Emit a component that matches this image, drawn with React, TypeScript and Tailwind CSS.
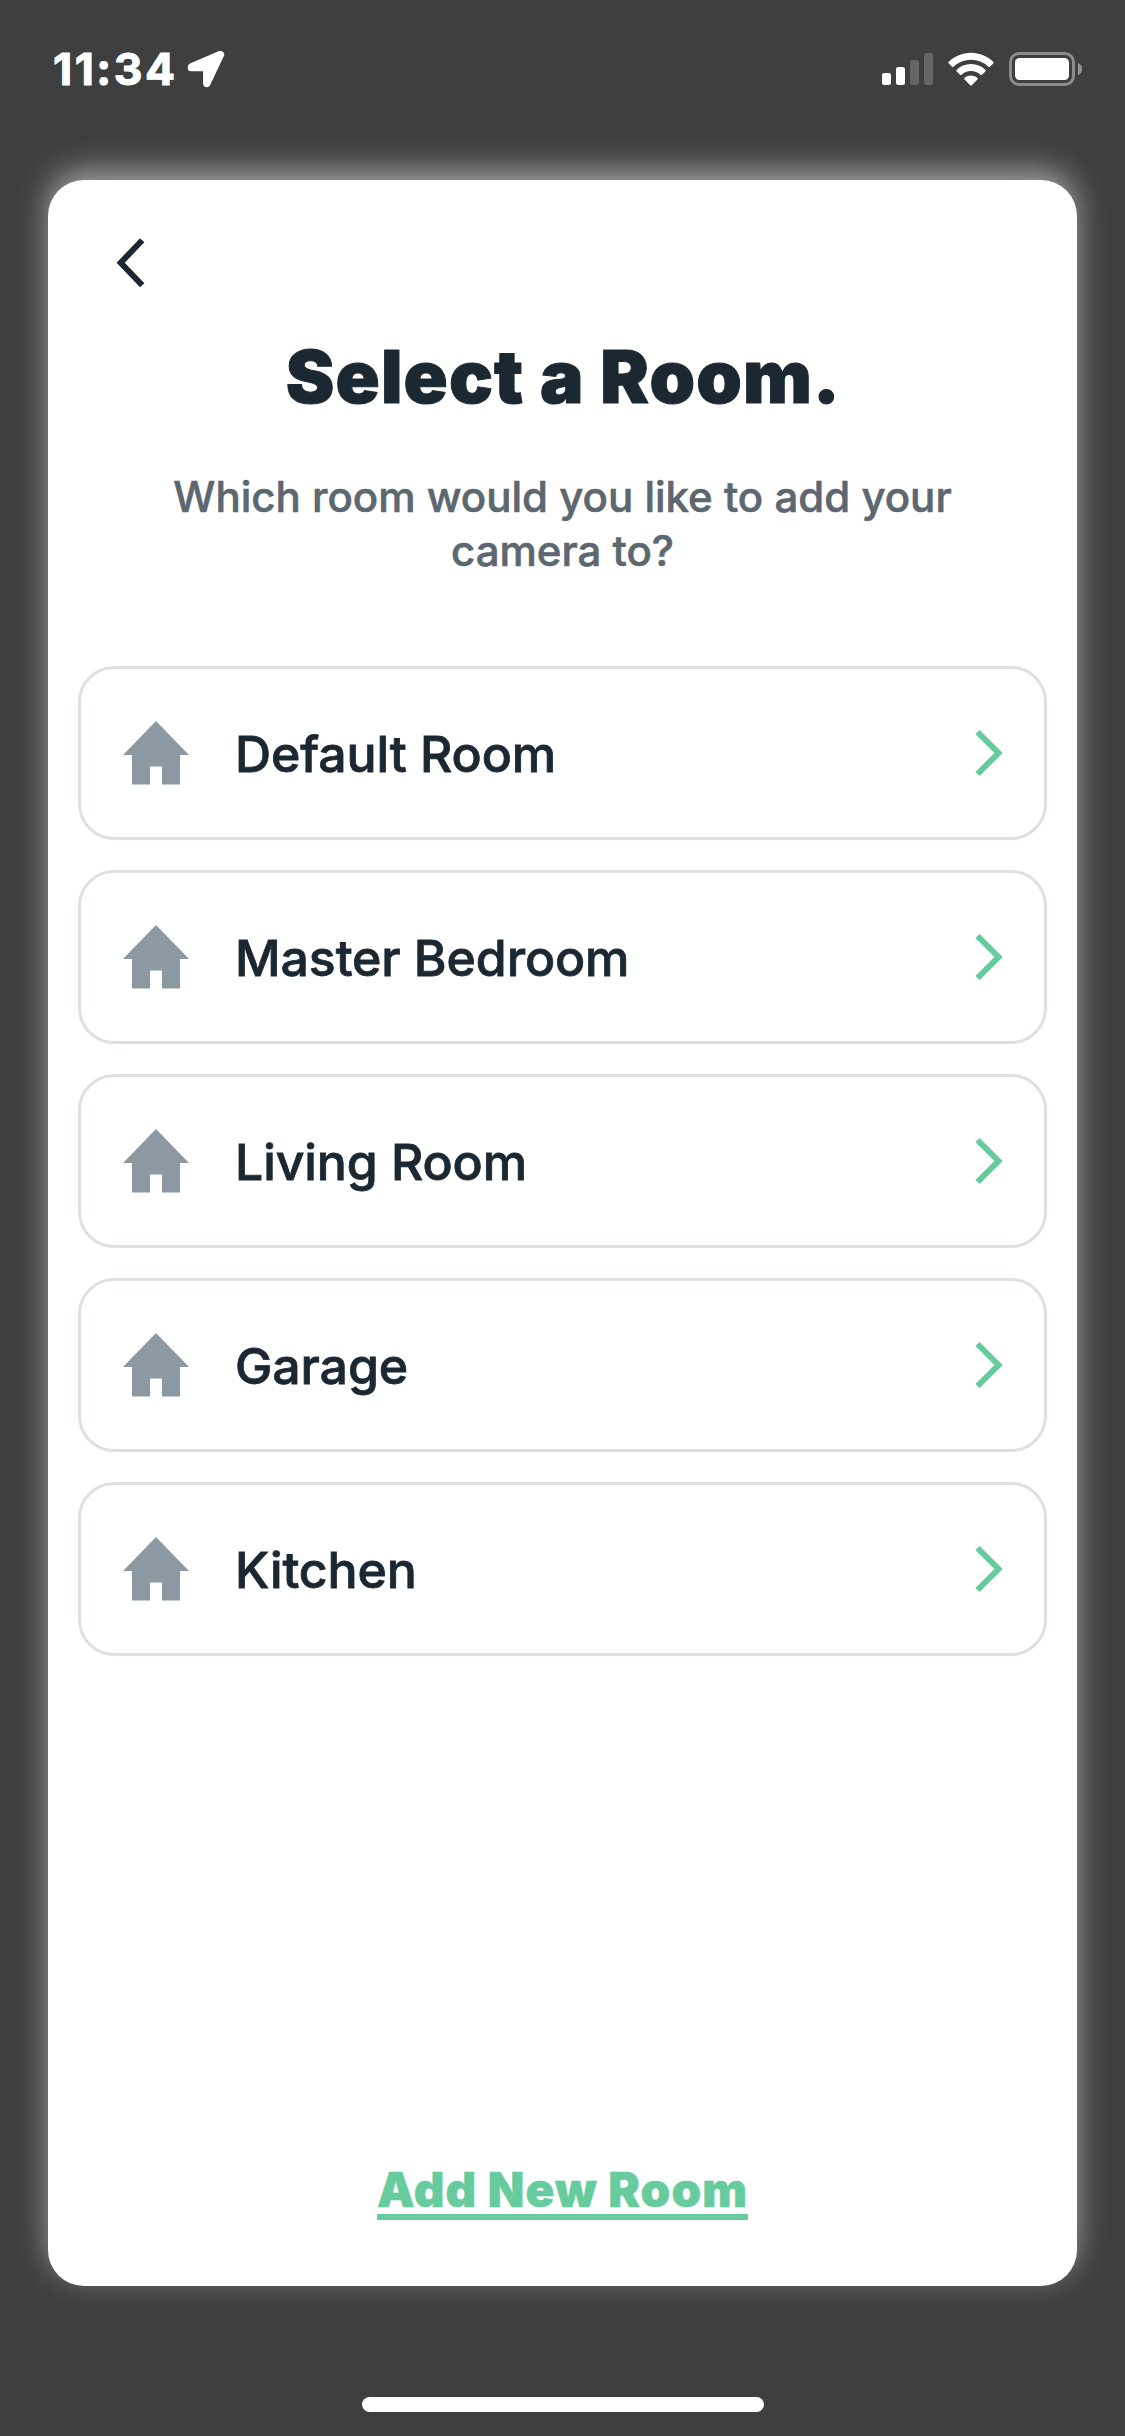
const rooms = ["Default Room", "Master Bedroom", "Living Room", "Garage", "Kitchen"];

function StatusBar() {
  return (
    <header className="flex h-[180px] items-start justify-between pt-[41px] pr-[42px] pl-[53px] text-white">
      <div className="flex h-14 items-center">
        <span className="w-[126px] text-[44.5px] leading-[56px] font-bold tracking-[2.5px] [-webkit-text-stroke:1px]">11:34</span>
        <svg className="ml-[8px] h-[38px] w-[38px]" viewBox="0 0 38 38" fill="currentColor">
          <path d="M31.5 1.3 3 13.6C-.2 15-.1 21.2 3.600 21.200H16.100V33.500C16.100 37.900 21.600 38.500 23.200 35L37 5.800C38.200 2.600 35.200-.1 31.500 1.300Z" />
        </svg>
      </div>
      <div className="flex h-14 items-center">
        <svg className="h-[32px] w-[51px]" viewBox="0 0 51 32" fill="currentColor">
          <rect x="0" y="20" width="9" height="12" rx="2.200" />
          <rect x="14" y="14" width="9" height="18" rx="2.200" />
          <rect x="28" y="7" width="9" height="25" rx="2.200" opacity=".2" />
          <rect x="42" y="0" width="9" height="32" rx="2.200" opacity=".2" />
        </svg>
        <svg className="ml-[15px] h-[34px] w-[46px]" viewBox="0 0 46 34" fill="currentColor">
          <path d="M23 .8C31.600.8 39.500 4.300 45.200 9.800Q46 10.600 45.200 11.400L42 14.700Q41.200 15.400 40.400 14.700A25 25 0 0 0 5.600 14.700Q4.800 15.400 4 14.700L.8 11.400Q0 10.600.8 9.800C6.500 4.300 14.400.8 23 .8Z" />
          <path d="M23 12.100C28.600 12.100 33.600 14.300 37.300 17.800Q38.100 18.600 37.300 19.400L34 22.700Q33.200 23.400 32.400 22.700A13.700 13.700 0 0 0 13.600 22.700Q12.800 23.400 12 22.700L8.700 19.400Q7.900 18.600 8.700 17.800C12.400 14.300 17.400 12.100 23 12.100Z" />
          <path d="M23 23.600C25.500 23.600 27.700 24.500 29.400 25.900Q30.200 26.700 29.400 27.500L23.800 33.200Q23 34 22.200 33.200L16.600 27.500Q15.800 26.700 16.600 25.900C18.300 24.500 20.500 23.600 23 23.600Z" />
        </svg>
        <svg className="ml-[15px] h-[34px] w-[74px]" viewBox="0 0 74 34" fill="currentColor">
          <rect x="1.500" y="1.500" width="63" height="31" rx="8.500" fill="none" stroke="currentColor" strokeWidth="3" opacity=".4" />
          <rect x="6" y="6" width="54" height="22" rx="4.500" />
          <path d="M69 11C71.600 12 73 14.300 73 17S71.600 22 69 23Z" opacity=".45" />
        </svg>
      </div>
    </header>
  );
}

function HouseIcon() {
  return (
    <svg className="h-[64px] w-[66px] shrink-0" viewBox="0 0 66 64" fill="#8c99a3">
      <path d="M33 0 66 34H57V63.500H39V45.500H27V63.500H9V34H0Z" />
    </svg>
  );
}

function RoomRow({ name }: { name: string }) {
  return (
    <li>
      <button className="flex h-[174px] w-full items-center rounded-[36px] border-[3px] border-[#dde1e5] pr-[40px] pl-[42px] text-left">
        <HouseIcon />
        <span className="ml-[46px] flex-1 pt-[1px] text-[50px] leading-[60px] font-medium tracking-[-0.1px] text-[#1b2832] [-webkit-text-stroke:0.8px]">{name}</span>
        <svg className="h-[48px] w-[30px]" viewBox="0 0 30 48" fill="none" stroke="#66cb9d" strokeWidth="6">
          <path d="M3.500 3 24.500 24 3.500 45" />
        </svg>
      </button>
    </li>
  );
}

export default function App() {
  return (
    <div className="flex h-[2436px] w-[1125px] flex-col overflow-hidden bg-[#3f3f3f] font-[Inter,sans-serif]">
      <StatusBar />
      <main className="mx-12 flex h-[2106px] flex-col items-center rounded-[36px] bg-white px-[30px] pt-[56px] shadow-[0_-10px_30px_rgba(255,255,255,0.5)]">
        <button className="ml-[38px] self-start" aria-label="Back">
          <svg className="h-[54px] w-[30px]" viewBox="0 0 30 54" fill="none" stroke="#1b2832" strokeWidth="6">
            <path d="M26.200 4.200 4.700 26.700 26.200 49.200" />
          </svg>
        </button>
        <h1 className="mt-[43px] ml-[2px] text-[73px] leading-[88px] font-black tracking-[1.100px] text-[#1b2832] [-webkit-text-stroke:1px]">
          Select a Room.
        </h1>
        <p className="mt-[49px] w-[840px] text-center text-[42px] leading-[54px] font-medium text-[#5c6770] [-webkit-text-stroke:0.600px]">
          Which room would you like to add your camera to?
        </p>
        <ul className="mt-[88px] flex w-full flex-col gap-[30px]">
          {rooms.map((name) => (
            <RoomRow key={name} name={name} />
          ))}
        </ul>
        <button className="mt-auto mb-[66px] h-[60px] border-b-[6px] border-[#66cb9d] text-[47.500px] leading-[60px] font-black tracking-[1.100px] text-[#66cb9d] [-webkit-text-stroke:0.500px]">
          Add New Room
        </button>
      </main>
      <div className="mx-auto mt-auto mb-6 h-[15px] w-[402px] rounded-full bg-white" />
    </div>
  );
}
